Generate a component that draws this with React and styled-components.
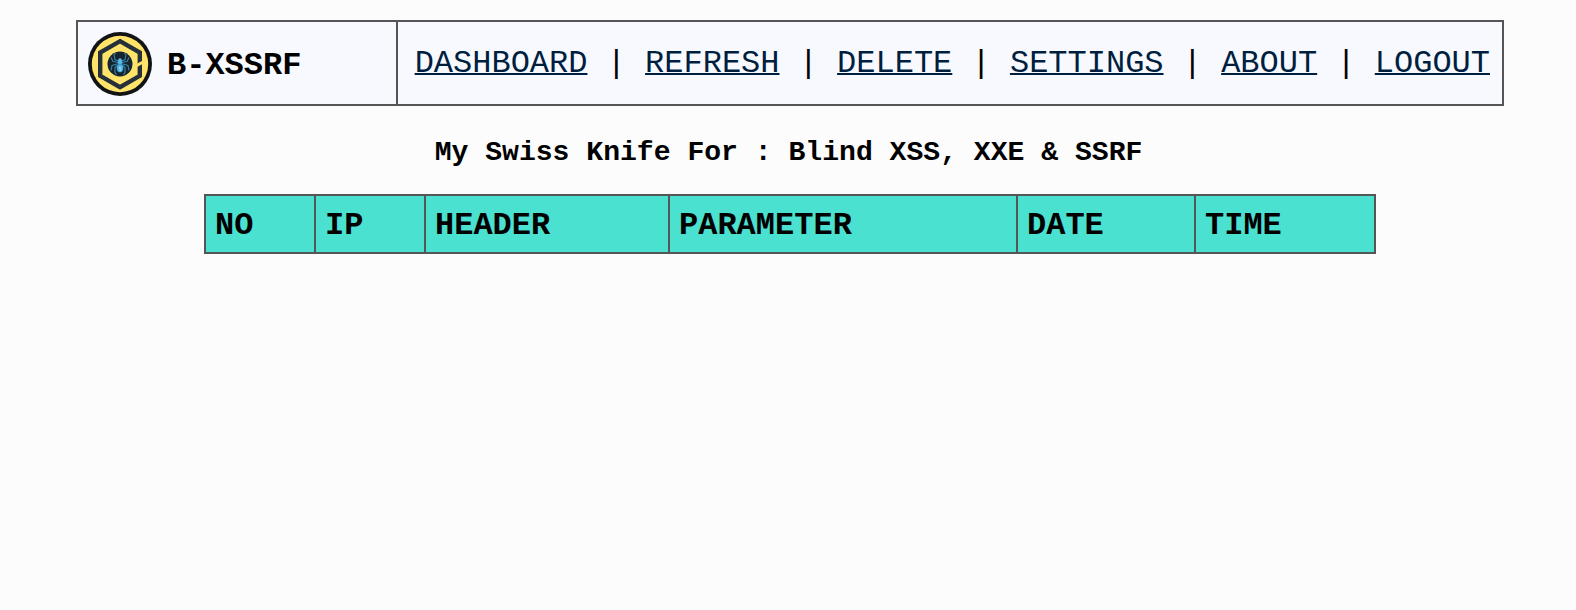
import React from "react";
import styled, { createGlobalStyle } from "styled-components";

const GlobalStyle = createGlobalStyle`
  * { box-sizing: border-box; }
  body {
    margin: 0;
    background: #fcfcfc;
    color: #000;
    font-family: "Liberation Mono", "Courier New", monospace;
    font-size: 32px;
    line-height: 36px;
  }
`;

const Page = styled.div`
  display: flex;
  flex-direction: column;
  align-items: center;
  min-height: 610px;
  padding: 20px 72px 0 76px;
`;

const Header = styled.header`
  display: flex;
  width: 100%;
  height: 86px;
  border: 2px solid #555;
  background: #f8f9ff;
`;

const Brand = styled.div`
  display: flex;
  align-items: center;
  gap: 15px;
  width: 320px;
  padding: 2px 0 0 10px;
  border-right: 2px solid #555;
`;

const Logo = styled.svg`
  display: block;
  width: 64px;
  height: 64px;
`;

const BrandName = styled.span`
  padding-top: 3px;
  font-weight: 700;
`;

const Nav = styled.nav`
  flex: 1;
  padding: 24px 12px 0 0;
  text-align: right;
  white-space: pre;
`;

const NavLink = styled.a`
  color: #001f3f;
  text-decoration: underline;
  text-decoration-thickness: 2px;
  text-underline-offset: 1px;
  text-decoration-skip-ink: none;
`;

const Title = styled.h3`
  margin: 31px 3px 0 0;
  font-size: 28.08px;
  line-height: 32px;
  font-weight: 700;
  white-space: pre;
`;

const Table = styled.div`
  display: grid;
  grid-template-columns: 110px 110px 244px 348px 178px 180px;
  width: 1172px;
  height: 60px;
  margin-top: 25px;
  border: 2px solid #555;
  border-right: 0;
  background: #4ae1d1;
`;

const HeadCell = styled.div`
  padding: 12px 0 0 9px;
  border-right: 2px solid #555;
  font-weight: 700;
`;

const LINKS = ["DASHBOARD", "REFRESH", "DELETE", "SETTINGS", "ABOUT", "LOGOUT"];
const COLUMNS = ["NO", "IP", "HEADER", "PARAMETER", "DATE", "TIME"];

function SpiderLogo() {
  return (
    <Logo viewBox="0 0 64 64" aria-hidden="true">
      <circle cx="32" cy="32" r="32" fill="#111315" />
      <circle cx="32" cy="32" r="28.2" fill="#ffe36a" />
      <path
        d="M32 9.2 51.8 20.6V43.8L32 55.2 12.2 43.8V20.6Z"
        fill="none"
        stroke="#263039"
        strokeWidth="4.4"
      />
      <path d="M47.5 34.2 55.5 29.8" stroke="#ffe36a" strokeWidth="3" />
      <circle cx="32" cy="32" r="12.5" fill="#16242e" />
      <g fill="none" stroke="#3789b0" strokeWidth="1.1" strokeLinejoin="round">
        <path d="M31 29.5l-4-2-1-4.5 1.5-2M33 29.5l4-2 1-4.5-1.5-2" />
        <path d="M31 30.5l-6-1-2-4M33 30.5l6-1 2-4" />
        <path d="M31 31.5l-7 2-1 5M33 31.5l7 2 1 5" />
        <path d="M31 32.5l-4 3v5l1.5 2M33 32.5l4 3v5l-1.5 2" />
      </g>
      <ellipse cx="32" cy="29.5" rx="2" ry="3.2" fill="#55b9e3" />
      <ellipse cx="32" cy="36.3" rx="3.2" ry="4" fill="#48ade0" />
      <path d="M33.4 35h-2.2v1.6h1.8v1.7h-2.2" fill="none" stroke="#c5e9f8" strokeWidth=".7" />
    </Logo>
  );
}

export default function App() {
  return (
    <>
      <GlobalStyle />
      <Page>
        <Header>
          <Brand>
            <SpiderLogo />
            <BrandName>B-XSSRF</BrandName>
          </Brand>
          <Nav>
            {LINKS.map((label, i) => (
              <React.Fragment key={label}>
                {i > 0 && " | "}
                <NavLink href="#">{label}</NavLink>
              </React.Fragment>
            ))}
          </Nav>
        </Header>
        <Title>{"My Swiss Knife For : Blind XSS, XXE & SSRF"}</Title>
        <Table>
          {COLUMNS.map((name) => (
            <HeadCell key={name}>{name}</HeadCell>
          ))}
        </Table>
      </Page>
    </>
  );
}
